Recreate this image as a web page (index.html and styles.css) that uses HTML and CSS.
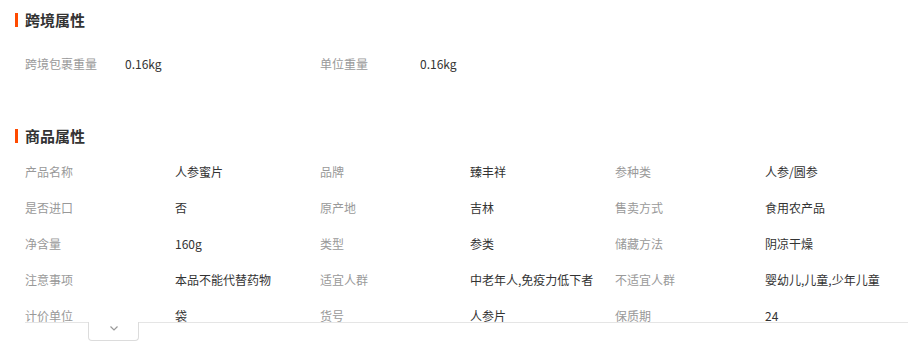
FILE: index.html
```html
<!DOCTYPE html>
<html lang="zh-CN">
<head>
<meta charset="utf-8">
<title>属性</title>
<link rel="stylesheet" href="styles.css">
</head>
<body>
<div class="page">
  <section class="sec sec-cross">
    <h3 class="sec-title">跨境属性</h3>
    <div class="cross-row">
      <div class="pair"><span class="lbl">跨境包裹重量</span><span class="val">0.16kg</span></div>
      <div class="pair"><span class="lbl">单位重量</span><span class="val">0.16kg</span></div>
    </div>
  </section>
  <section class="sec sec-attr">
    <h3 class="sec-title">商品属性</h3>
    <div class="attr-wrap">
      <div class="attr-grid">
        <div class="cell"><span class="lbl">产品名称</span><span class="val">人参蜜片</span></div>
        <div class="cell"><span class="lbl">品牌</span><span class="val">臻丰祥</span></div>
        <div class="cell"><span class="lbl">参种类</span><span class="val">人参/圆参</span></div>
        <div class="cell"><span class="lbl">是否进口</span><span class="val">否</span></div>
        <div class="cell"><span class="lbl">原产地</span><span class="val">吉林</span></div>
        <div class="cell"><span class="lbl">售卖方式</span><span class="val">食用农产品</span></div>
        <div class="cell"><span class="lbl">净含量</span><span class="val">160g</span></div>
        <div class="cell"><span class="lbl">类型</span><span class="val">参类</span></div>
        <div class="cell"><span class="lbl">储藏方法</span><span class="val">阴凉干燥</span></div>
        <div class="cell"><span class="lbl">注意事项</span><span class="val">本品不能代替药物</span></div>
        <div class="cell"><span class="lbl">适宜人群</span><span class="val">中老年人,免疫力低下者</span></div>
        <div class="cell"><span class="lbl">不适宜人群</span><span class="val">婴幼儿,儿童,少年儿童</span></div>
        <div class="cell"><span class="lbl">计价单位</span><span class="val">袋</span></div>
        <div class="cell"><span class="lbl">货号</span><span class="val">人参片</span></div>
        <div class="cell"><span class="lbl">保质期</span><span class="val">24</span></div>
      </div>
      <div class="more" role="button" aria-label="展开">
        <svg width="8" height="5" viewBox="0 0 8 5"><path d="M0.5 0.5 L4 4 L7.5 0.5" fill="none" stroke="#999" stroke-width="1.2"/></svg>
      </div>
    </div>
  </section>
</div>
</body>
</html>
```
FILE: styles.css
```css
* { box-sizing: border-box; }
html, body { margin: 0; padding: 0; background: #fff; }
body {
  font-family: "Noto Sans CJK SC", "Liberation Sans", sans-serif;
  font-size: 12px;
  color: #333;
}
.page { width: 908px; padding-top: 10px; }
.sec-title {
  margin: 0;
  display: flex;
  align-items: center;
  height: 20px;
  padding-left: 15px;
  font-size: 15px;
  font-weight: bold;
  color: #333;
  line-height: 20px;
}
.sec-title::before {
  content: "";
  width: 3px;
  height: 14px;
  background: #ff4a00;
  margin-right: 7px;
}
.cross-row {
  display: flex;
  padding-left: 25px;
  margin-top: 24px;
  height: 20px;
  line-height: 20px;
}
.cross-row .pair { width: 295px; display: flex; }
.cross-row .lbl { width: 100px; }
.lbl { color: #999; white-space: nowrap; }
.val { color: #333; white-space: nowrap; }
.sec-attr { margin-top: 52px; }
.attr-wrap {
  margin-top: 7px;
  margin-left: 25px;
  display: flex;
  flex-direction: column;
  align-items: flex-start;
}
.attr-grid {
  width: 883px;
  height: 169px;
  overflow: hidden;
  display: grid;
  grid-template-columns: 295px 295px 293px;
  grid-auto-rows: 36px;
  border-bottom: 1px solid #e5e5e5;
  box-sizing: content-box;
}
.cell { display: flex; align-items: center; }
.cell .lbl { width: 150px; }
.more {
  margin-top: -1px;
  margin-left: 63px;
  width: 51px;
  height: 19px;
  padding-bottom: 5px;
  background: #fff;
  border: 1px solid #dcdcdc;
  border-top: none;
  border-radius: 0 0 4px 4px;
  display: flex;
  align-items: center;
  justify-content: center;
  cursor: pointer;
}
.more svg { display: block; }
```
